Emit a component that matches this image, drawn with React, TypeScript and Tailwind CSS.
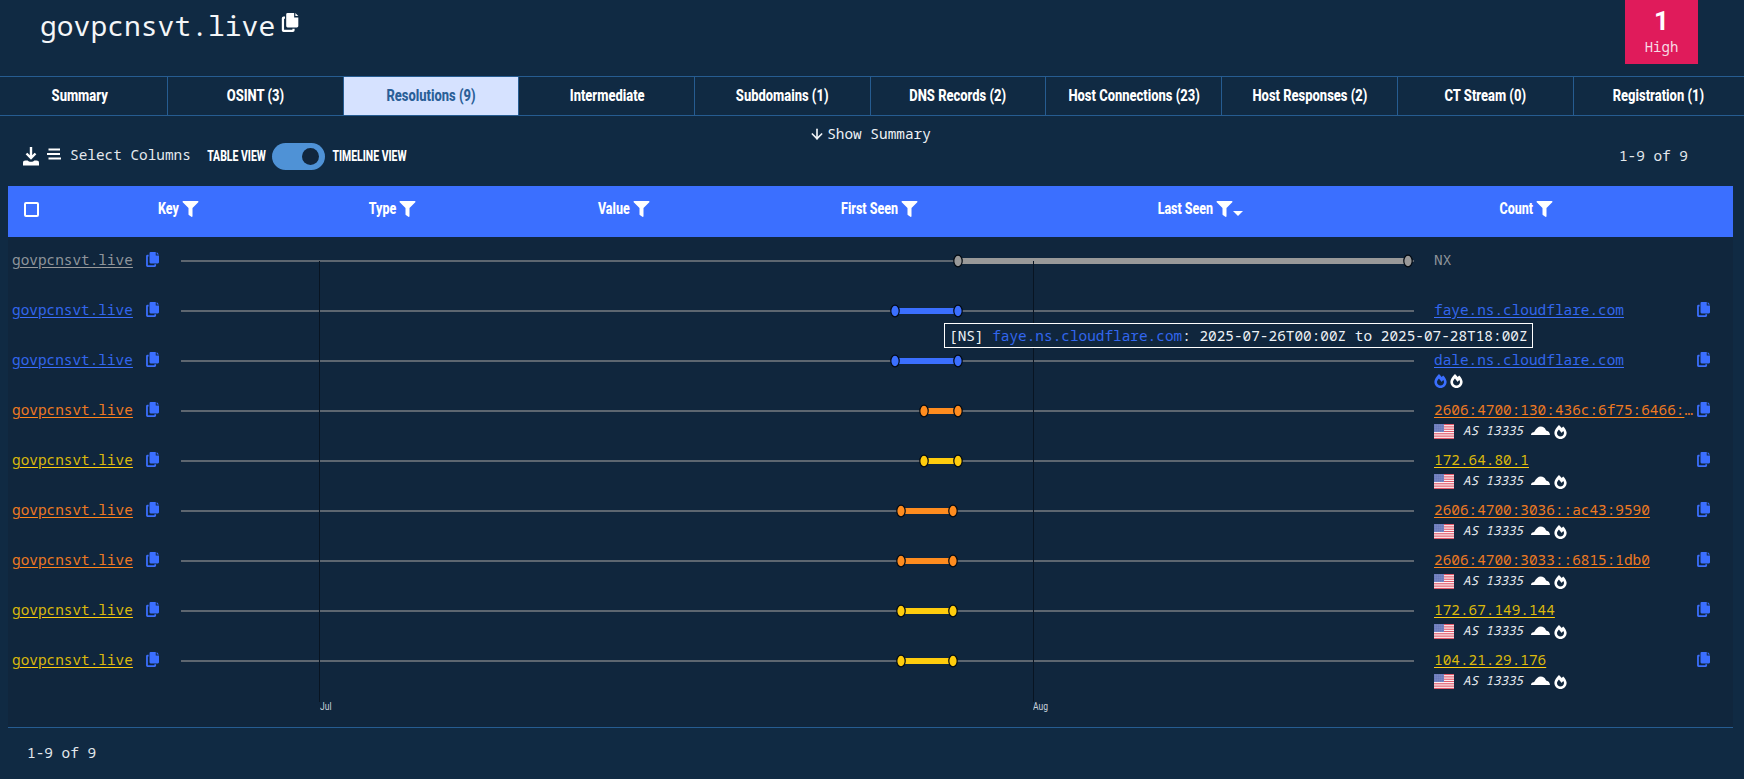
import React from 'react';
import { FaFilter, FaFireAlt } from 'react-icons/fa';
import { ArrowDown } from 'lucide-react';

const tabs = ['Summary', 'OSINT (3)', 'Resolutions (9)', 'Intermediate', 'Subdomains (1)', 'DNS Records (2)', 'Host Connections (23)', 'Host Responses (2)', 'CT Stream (0)', 'Registration (1)'];

const columns = ['Key', 'Type', 'Value', 'First Seen', 'Last Seen', 'Count'];

const GRAY = { text: 'text-[#8f959b]', line: 'decoration-[#9a9a9a]', fill: '#999999' };
const BLUE = { text: 'text-[#3367ee]', line: 'decoration-[#3b6fff]', fill: '#3b6fff' };
const ORANGE = { text: 'text-[#ee7a22]', line: 'decoration-[#ff8519]', fill: '#ff8c1f' };
const YELLOW = { text: 'text-[#dcb90c]', line: 'decoration-[#ffcc0d]', fill: '#ffcc0d' };

const rows = [
  { value: 'NX', color: GRAY, from: 777, to: 1227, plain: true },
  { value: 'faye.ns.cloudflare.com', color: BLUE, from: 714, to: 777, copy: true },
  { value: 'dale.ns.cloudflare.com', color: BLUE, from: 714, to: 777, copy: true, flames: true },
  { value: '2606:4700:130:436c:6f75:6466:6c61:7265', color: ORANGE, from: 743, to: 777, copy: true, asn: true },
  { value: '172.64.80.1', color: YELLOW, from: 743, to: 777, copy: true, asn: true },
  { value: '2606:4700:3036::ac43:9590', color: ORANGE, from: 720, to: 772, copy: true, asn: true },
  { value: '2606:4700:3033::6815:1db0', color: ORANGE, from: 720, to: 772, copy: true, asn: true },
  { value: '172.67.149.144', color: YELLOW, from: 720, to: 772, copy: true, asn: true },
  { value: '104.21.29.176', color: YELLOW, from: 720, to: 772, copy: true, asn: true },
];

function CopyIcon({ className }: { className: string }) {
  return (
    <svg viewBox="0 0 14 16" className={className} fill="currentColor">
      <path d="M5 0h5.500v3.700h3.500v7.300a1.200 1.200 0 0 1-1.200 1.200H5a1.200 1.200 0 0 1-1.200-1.200V1.200A1.200 1.200 0 0 1 5 0z" />
      <path d="M11.500 0l2.500 2.500h-2.500z" />
      <path d="M2 4.800v9.400h7v-1h1.900v1.300a1.500 1.500 0 0 1-1.500 1.500H1.600A1.500 1.500 0 0 1 .1 14.500V4.500A1.500 1.500 0 0 1 1.600 3h1.200v1.800z" />
    </svg>
  );
}

function Flag() {
  return (
    <svg viewBox="0 0 20 15" className="w-5 h-[15px] shrink-0">
      <rect width="20" height="15" fill="#fff" />
      {[0, 2.3, 4.6, 6.9, 9.2, 11.500, 13.800].map((y) => (
        <rect key={y} y={y} width="20" height="1.200" fill="#e0586a" />
      ))}
      <rect width="10" height="8" fill="#5566b0" />
      {[1, 3, 5, 7, 9].map((x) =>
        [1, 3, 5, 7].map((y) => <rect key={`${x}-${y}`} x={x - 0.4} y={y - 0.4} width="0.9" height="0.9" fill="#dfe4f5" />),
      )}
    </svg>
  );
}

function Cloud() {
  return (
    <svg viewBox="0 0 19 9" className="w-[19px] h-[9px] shrink-0 block" fill="#fff">
      <path d="M0 9c0-1.600 1-2.700 2.500-2.800.5-.1.800-.2 1-.6C5 2.400 7.200.4 9.800.4c2.400 0 4.300 1.500 5 3.500.2.500.4.700.9.800 1.600.3 3.300 1.900 3.300 4.300z" />
    </svg>
  );
}

function Track({ from, to, fill }: { from: number; to: number; fill: string }) {
  return (
    <svg width="1234" height="48" className="shrink-0 block">
      <line x1="0" x2="1233" y1="24" y2="24" stroke="#5d6670" strokeWidth="2" />
      <rect x={from} y="21" width={to - from} height="6" fill={fill} />
      <ellipse cx={from} cy="24" rx="4.200" ry="5.800" fill={fill} stroke="#030a12" strokeWidth="1.200" />
      <ellipse cx={to} cy="24" rx="4.200" ry="5.800" fill={fill} stroke="#030a12" strokeWidth="1.200" />
    </svg>
  );
}

export default function App() {
  const mono = "font-['Noto_Sans_Mono','DejaVu_Sans_Mono',monospace]";
  return (
    <div className={`h-[779px] w-[1744px] overflow-hidden bg-[#102a43] text-white text-[14.400px] ${mono}`}>
      {/* Title + severity */}
      <header className="h-[76px] flex justify-between items-start pl-10 pr-[46px]">
        <div className="flex items-start pt-[6px]">
          <h1 className="text-[28px] leading-[38px] font-normal text-[#f4f6f8]">govpcnsvt.live</h1>
          <CopyIcon className="w-[18px] h-[19px] ml-[6px] mt-[7px] text-white" />
        </div>
        <div className="w-[73px] h-[64px] bg-[#e01b5b] flex flex-col items-center pt-[7px]">
          <span className="font-['Roboto',sans-serif] font-bold text-[26px] leading-[28px]">1</span>
          <span className="text-[14px] leading-5 mt-[2px] text-[#f7dbe4]">High</span>
        </div>
      </header>

      {/* Tabs */}
      <nav className="h-10 grid grid-cols-[168px_repeat(8,175.700px)_1fr] border-y border-[#265c91]">
        {tabs.map((tab, i) => (
          <div
            key={tab}
            className={`flex items-center justify-center ${i === 0 ? 'pr-2' : ''} ${i < tabs.length - 1 ? 'border-r border-[#265c91]' : ''} ${i === 2 ? 'bg-[#d6e2ff] text-[#2a5f98]' : 'text-white'}`}
          >
            <span className="font-['Roboto',sans-serif] font-extrabold text-[16px] whitespace-nowrap scale-x-[0.81]">{tab}</span>
          </div>
        ))}
      </nav>

      {/* Show summary */}
      <div className="h-[18px] mt-[9px] flex items-center justify-center pr-[4px] text-[#eef2f6]">
        <ArrowDown size={16} strokeWidth={2.500} />
        <span className="ml-[2px]">Show Summary</span>
      </div>

      {/* Toolbar */}
      <div className="h-[27px] mb-4 flex items-center pl-[22px] pr-[56px]">
        <svg viewBox="0 0 18 20" className="w-[18px] h-5 mb-[2px] shrink-0 text-white" fill="currentColor">
          <path d="M9 1v10M4.500 7.500L9 12l4.500-4.500" fill="none" stroke="currentColor" strokeWidth="2.400" />
          <path d="M1 17c0-1.800.8-2.500 2.500-2.500h2.200c1 1.700 5.600 1.700 6.600 0h2.200c1.700 0 2.500.7 2.500 2.500v2.500H1z" />
        </svg>
        <svg viewBox="0 0 14 12" className="w-[14px] h-3 ml-[7px] mb-[5px] shrink-0" stroke="#fff" strokeWidth="2">
          <path d="M1.500 1.500H13M0 6h13M1.500 10.500H14" />
        </svg>
        <span className="ml-[9px] mb-[3px] text-[#e4e9ee]">Select Columns</span>
        <span className="ml-[16px] font-['Roboto',sans-serif] font-extrabold text-[14.500px] whitespace-nowrap w-[59px] flex justify-center scale-x-[0.72]">TABLE VIEW</span>
        <div className="ml-[6px] w-[53px] h-[27px] rounded-full bg-[#4f92d6] flex items-center justify-end pr-[6px] shrink-0">
          <div className="w-[17px] h-[17px] rounded-full bg-[#11263d]" />
        </div>
        <span className="ml-2 font-['Roboto',sans-serif] font-extrabold text-[14.500px] whitespace-nowrap w-[73px] flex justify-center scale-x-[0.72]">TIMELINE VIEW</span>
        <span className="ml-auto mb-[1px] text-[#e4e9ee]">1-9 of 9</span>
      </div>

      {/* Table */}
      <section className="ml-2 mr-[11px] bg-[#10263d]">
        <div className="h-[51px] pb-[5px] bg-[#3b6fff] grid grid-cols-[56px_135px_217px_234px_268px_325px_310px_1fr] items-center">
          <div className="pl-4">
            <div className="w-[15px] h-[15px] rounded-[2px] border-2 border-white" />
          </div>
          {columns.map((col) => (
            <div key={col} className="flex items-center justify-end">
              <span className="font-['Roboto',sans-serif] font-extrabold text-[16px] whitespace-nowrap origin-right scale-x-[0.78]">{col}</span>
              <FaFilter className="text-white w-[17px] h-[16px] ml-[3px] shrink-0" />
              {col === 'Last Seen' ? (
                <span className="mt-[8px] w-0 h-0 border-x-[5px] border-x-transparent border-t-[5px] border-t-white" />
              ) : null}
            </div>
          ))}
        </div>

        <div className="relative">
          {rows.map((row, i) => (
            <div key={i} className="h-[50px] flex items-start">
              <div className="w-[173px] shrink-0 flex items-start pt-[13px] pl-1">
                <a className={`${row.color.text} ${row.color.line} underline underline-offset-2 leading-5`}>govpcnsvt.live</a>
                <CopyIcon className="w-[13px] h-[15px] ml-[13px] mt-[2px] text-[#3b6fff]" />
              </div>
              <Track from={row.from} to={row.to} fill={row.color.fill} />
              <div className="ml-[19px] w-[261px] shrink-0 pt-[13px]">
                <div className={`leading-5 truncate ${row.color.text} ${row.plain ? '' : `underline underline-offset-2 ${row.color.line}`}`}>{row.value}</div>
                {row.flames && (
                  <div className="flex items-center gap-[3px] mt-[4px]">
                    <FaFireAlt className="w-[13px] h-[14px] text-[#3b6fff]" />
                    <FaFireAlt className="w-[13px] h-[14px] text-white" />
                  </div>
                )}
                {row.asn && (
                  <div className="flex items-center mt-[4px] h-[15px]">
                    <Flag />
                    <span className="ml-[9px] italic text-[12.500px] text-[#e6ebf0] whitespace-nowrap">AS 13335</span>
                    <span className="ml-2 mb-[3px]"><Cloud /></span>
                    <FaFireAlt className="w-[13px] h-[14px] ml-1 text-white" />
                  </div>
                )}
              </div>
              {row.copy && <CopyIcon className="w-[13px] h-[15px] ml-[2px] mt-[15px] text-[#3b6fff]" />}
            </div>
          ))}

          {/* Month gridlines */}
          <div className="absolute left-[311px] top-6 w-px h-[441px] bg-[#081422]" />
          <div className="absolute left-[1025px] top-6 w-px h-[441px] bg-[#081422]" />

          {/* Hover tooltip */}
          <div className="absolute left-[936px] top-[86px] h-[25px] px-[4px] flex items-center whitespace-nowrap border-[1.500px] border-white bg-[#10263d] text-[#eef2f6]">
            [NS]&nbsp;<span className="text-[#3367ee]">faye.ns.cloudflare.com</span>: 2025-07-26T00:00Z to 2025-07-28T18:00Z
          </div>

          <div className="h-[40px] flex pl-[312px] pt-[14px]">
            <span className="w-[713px] font-['Roboto',sans-serif] text-[10px] leading-3 text-[#c9d3dc]"><span className="inline-block origin-left scale-x-[0.85]">Jul</span></span>
            <span className="font-['Roboto',sans-serif] text-[10px] leading-3 text-[#c9d3dc]"><span className="inline-block origin-left scale-x-[0.85]">Aug</span></span>
          </div>
        </div>
      </section>

      {/* Footer */}
      <footer className="ml-2 mr-[11px] border-t border-[#265c91] pl-[19px] pt-[14px] text-[#e4e9ee]">1-9 of 9</footer>
    </div>
  );
}
